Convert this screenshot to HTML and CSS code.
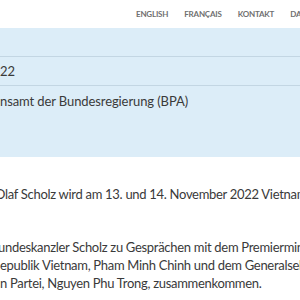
FILE: index.html
```html
<!DOCTYPE html>
<html lang="de">
<head>
<meta charset="utf-8">
<link rel="stylesheet" href="styles.css">
</head>
<body>
<header class="top">
  <nav class="meta-nav">
    <a class="meta-link">English</a>
    <a class="meta-link">Français</a>
    <a class="meta-link">Kontakt</a>
    <a class="meta-link">Datenschutz</a>
  </nav>
</header>
<section class="band">
  <div class="row row-empty"></div>
  <div class="row row-date"><span class="cut cut-date">22</span></div>
  <div class="row row-source"><span class="cut cut-source">nsamt der Bundesregierung (BPA)</span></div>
</section>
<main class="article">
  <p class="lead"><span class="line cut-lead">Olaf Scholz wird am 13. und 14. November 2022 Vietnam (besuchen.</span></p>
  <p class="body-text">
    <span class="line cut-1">undeskanzler Scholz zu Gesprächen mit dem Premierminister der</span>
    <span class="line cut-2">epublik Vietnam, Pham Minh Chinh und dem Generalsekretär</span>
    <span class="line cut-3">n Partei, Nguyen Phu Trong, zusammenkommen.</span>
  </p>
</main>
</body>
</html>
```

FILE: styles.css
```css
html, body {
  margin: 0;
  padding: 0;
  background: #ffffff;
  overflow: hidden;
}
body {
  font-family: Lato, "Open Sans", sans-serif;
  color: #3a3a3a;
  width: 300px;
}
.top {
  height: 28px;
  display: flex;
  align-items: center;
}
.meta-nav {
  display: flex;
  gap: 16px;
  margin-left: 136px;
  white-space: nowrap;
}
.meta-link {
  font-size: 8px;
  font-weight: 700;
  letter-spacing: -0.2px;
  text-transform: uppercase;
  color: #707070;
  line-height: 1;
}
.band {
  background: #dcedf8;
  height: 129px;
  display: flex;
  flex-direction: column;
}
.row {
  height: 28px;
  border-bottom: 1px solid #c3d6e3;
  display: flex;
  align-items: center;
  font-size: 13px;
  letter-spacing: -0.1px;
  white-space: nowrap;
}
.row-source {
  border-bottom: none;
  height: 30px;
}
.cut {
  display: block;
}
.article {
  font-size: 13px;
  letter-spacing: -0.3px;
  white-space: nowrap;
}
.lead {
  margin: 28px 0 0;
  line-height: 18px;
}
.body-text {
  margin: 35px 0 0;
  line-height: 18px;
  display: flex;
  flex-direction: column;
}
.line {
  display: block;
}
.cut-lead {
  margin-left: -5px;
}
.cut-1 {
  margin-left: -2px;
}
```
